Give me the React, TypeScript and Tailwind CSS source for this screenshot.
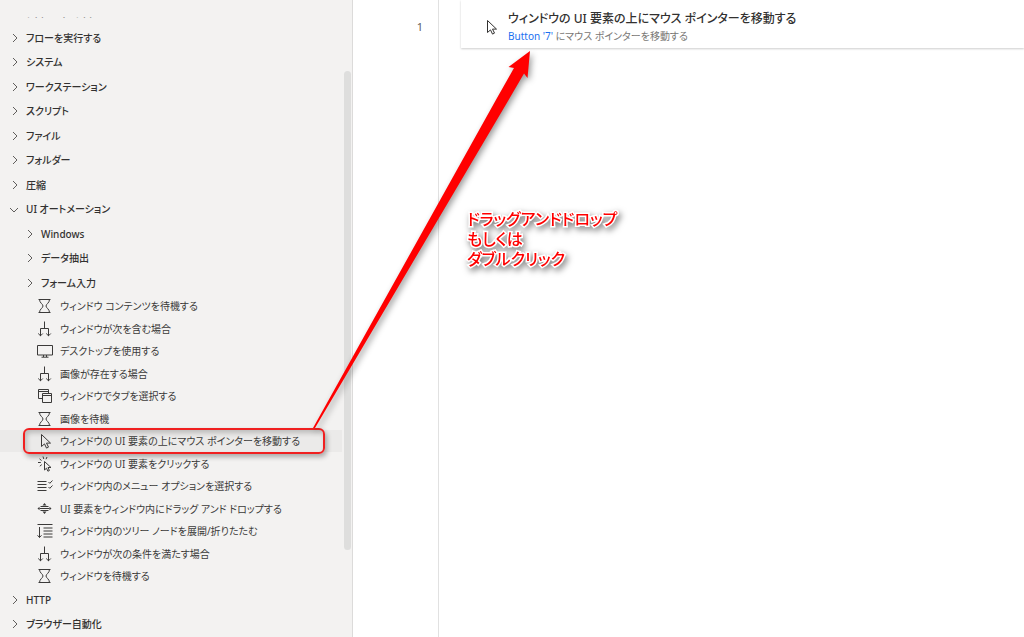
import type { ReactNode } from "react";

type IconName = "wait" | "branch" | "desktop" | "tabs" | "pointer" | "click" | "menu" | "drag" | "tree";

const paths: Record<IconName, ReactNode> = {
  wait: <path d="M1.500 1.500h12M1.500 14.500h12M2.500 1.500c0 3.500 3.500 4.500 3.500 6.500s-3.500 3-3.500 6.500M12.500 1.500c0 3.500-3.500 4.500-3.500 6.500s3.500 3 3.500 6.500" />,
  branch: <path d="M7.500 .5v7M3.500 15v-7.500h8v7.500M1.200 12.500l2.300 2.300 2.300-2.300M9.200 12.500l2.300 2.300 2.300-2.300" />,
  desktop: <path d="M.5 2.500h15v9.500h-15zM6.500 12v2M9.500 12v2M4.500 14.200h7" />,
  tabs: <path d="M5.500 10.500h-4v-9h10v4M1.500 3.500h10M5.500 5.500h9v9h-9zM5.500 7.500h9" />,
  pointer: <path d="M4.500 1.500v12l3-2.600 2 4.200 2-1-2-4h4z" />,
  click: <path d="M7.500 5.500v8.500l2-1.800 1.400 3 1.500-.7-1.400-3h3zM6 .5l.8 2.500M10 1L9 3.200M2.500 2.800l2 1.700M1 6.500h2.800M2.800 10.200l2-1.600" />,
  menu: <path d="M.5 3.500h9M.5 6.500h9M.5 9.500h9M.5 12.500h9M11.500 4l1.300 1.300L15.500 2.500M11.500 9l1.300 1.300L15.500 7.500" />,
  drag: (
    <>
      <path d="M3.500 5.500h8M2.500 7.500h10M3.500 9.500h8" />
      <path d="M5.500 4.500l2-2.500 2 2.500zM5.500 10.500l2 2.500 2-2.500zM2.500 5.800L.5 7.500l2 1.700zM12.500 5.800l2 1.700-2 1.700z" fill="currentColor" stroke="none" />
    </>
  ),
  tree: <path d="M.5 1.500h15M2.500 4v10.500M.5 12.300l2 2.200 2-2.200M6.500 5h9M6.500 8h9M6.500 11h9M6.500 14h9" />,
};

function Icon({ name }: { name: IconName }) {
  return (
    <svg viewBox="0 0 16 16" className="size-4 shrink-0" fill="none" stroke="currentColor" aria-hidden="true">
      {paths[name]}
    </svg>
  );
}

type Node = { label: string; level?: number; open?: boolean; icon?: IconName; selected?: boolean };

const nodes: Node[] = [
  { label: "フローを実行する" },
  { label: "システム" },
  { label: "ワークステーション" },
  { label: "スクリプト" },
  { label: "ファイル" },
  { label: "フォルダー" },
  { label: "圧縮" },
  { label: "UI オートメーション", open: true },
  { label: "Windows", level: 1 },
  { label: "データ抽出", level: 1 },
  { label: "フォーム入力", level: 1 },
  { label: "ウィンドウ コンテンツを待機する", icon: "wait" },
  { label: "ウィンドウが次を含む場合", icon: "branch" },
  { label: "デスクトップを使用する", icon: "desktop" },
  { label: "画像が存在する場合", icon: "branch" },
  { label: "ウィンドウでタブを選択する", icon: "tabs" },
  { label: "画像を待機", icon: "wait" },
  { label: "ウィンドウの UI 要素の上にマウス ポインターを移動する", icon: "pointer", selected: true },
  { label: "ウィンドウの UI 要素をクリックする", icon: "click" },
  { label: "ウィンドウ内のメニュー オプションを選択する", icon: "menu" },
  { label: "UI 要素をウィンドウ内にドラッグ アンド ドロップする", icon: "drag" },
  { label: "ウィンドウ内のツリー ノードを展開/折りたたむ", icon: "tree" },
  { label: "ウィンドウが次の条件を満たす場合", icon: "branch" },
  { label: "ウィンドウを待機する", icon: "wait" },
  { label: "HTTP" },
  { label: "ブラウザー自動化" },
];

function Category({ label, level = 0, open = false }: Node) {
  return (
    <button
      type="button"
      aria-expanded={open}
      className={`flex h-6 w-full items-center gap-1.5 text-left font-medium whitespace-nowrap text-[#323130] ${level ? "pl-[23px]" : "pl-2"}`}
    >
      <svg viewBox="0 0 12 12" className={`size-3 shrink-0 ${open ? "rotate-90" : ""}`} fill="none" stroke="#605e5c" aria-hidden="true">
        <path d="M5 2l4 4-4 4" />
      </svg>
      {label}
    </button>
  );
}

function Action({ label, icon = "wait", selected }: Node) {
  return (
    <div className={`relative ${selected ? "bg-[#ebeae9]" : ""}`}>
      <button type="button" className="flex h-[22px] w-full items-center gap-[7px] pl-[37px] text-left whitespace-nowrap text-[#3b3a39]">
        <Icon name={icon} />
        {label}
      </button>
      {selected && (
        <div className="pointer-events-none absolute -inset-y-0.5 left-[23px] w-[302px] rounded-md border-2 border-[#f02020] shadow-[2px_3px_5px_rgba(0,0,0,0.3),inset_2px_3px_5px_rgba(0,0,0,0.2)]" />
      )}
    </div>
  );
}

function ActionsPane() {
  return (
    <aside className="flex w-[353px] shrink-0 border-r border-[#dcdbda] bg-[#f3f2f1] text-[10px] leading-none">
      <ul className="mt-[17px] mb-px flex min-w-0 flex-1 flex-col justify-between">
        <li className="flex h-2 items-end overflow-hidden">
          <Category label="フロー コントロール" />
        </li>
        {nodes.map((node) => (
          <li key={node.label}>{node.icon ? <Action {...node} /> : <Category {...node} />}</li>
        ))}
      </ul>
      <div className="ml-0.5 w-2 pt-[71px]">
        <div className="h-[479px] w-[7px] rounded-full bg-[#dededd]" />
      </div>
    </aside>
  );
}

function Annotation() {
  return (
    <>
      <svg className="pointer-events-none absolute top-0 left-0 h-[637px] w-[1024px] drop-shadow-[2px_3px_3px_rgba(0,0,0,0.4)]" viewBox="0 0 1024 637" aria-hidden="true">
        <path d="M313 428L497 98L514 68L508.500 67L530 51L527.500 78L524 73.500L508 101L315 428z" fill="#ff0000" />
      </svg>
      <p className="absolute top-[209px] left-[467px] text-[16px] leading-5 font-medium whitespace-nowrap text-[#ff0000] [paint-order:stroke_fill] [-webkit-text-stroke:3px_white] drop-shadow-[2px_3px_3px_rgba(0,0,0,0.5)]">
        ドラッグアンドドロップ
        <br />
        もしくは
        <br />
        ダブルクリック
      </p>
    </>
  );
}

export default function App() {
  return (
    <div className="relative flex h-screen min-h-[637px] overflow-hidden bg-white font-['Noto_Sans','Noto_Sans_CJK_JP',sans-serif] [font-feature-settings:'palt']">
      <ActionsPane />
      <main className="flex min-w-0 flex-1">
        <div className="w-[86px] shrink-0 border-r border-[#e1e1e1] pt-[19px] pr-[15px] text-right text-[11px] leading-4 text-[#605e5c]">1</div>
        <div className="min-w-0 flex-1 pl-[22px]">
          <article className="flex h-12 items-center gap-[9px] pt-1.5 pl-[22px] whitespace-nowrap shadow-[0_1px_2px_rgba(0,0,0,0.2)]">
            <span className="text-[#323130]">
              <Icon name="pointer" />
            </span>
            <div>
              <h2 className="text-[12px] leading-[18px] font-medium text-[#323130]">ウィンドウの UI 要素の上にマウス ポインターを移動する</h2>
              <p className="text-[10px] leading-4 text-[#797775]">
                <a href="#button-7" className="text-[#1a6ff0]">Button '7'</a> にマウス ポインターを移動する
              </p>
            </div>
          </article>
        </div>
      </main>
      <Annotation />
    </div>
  );
}
